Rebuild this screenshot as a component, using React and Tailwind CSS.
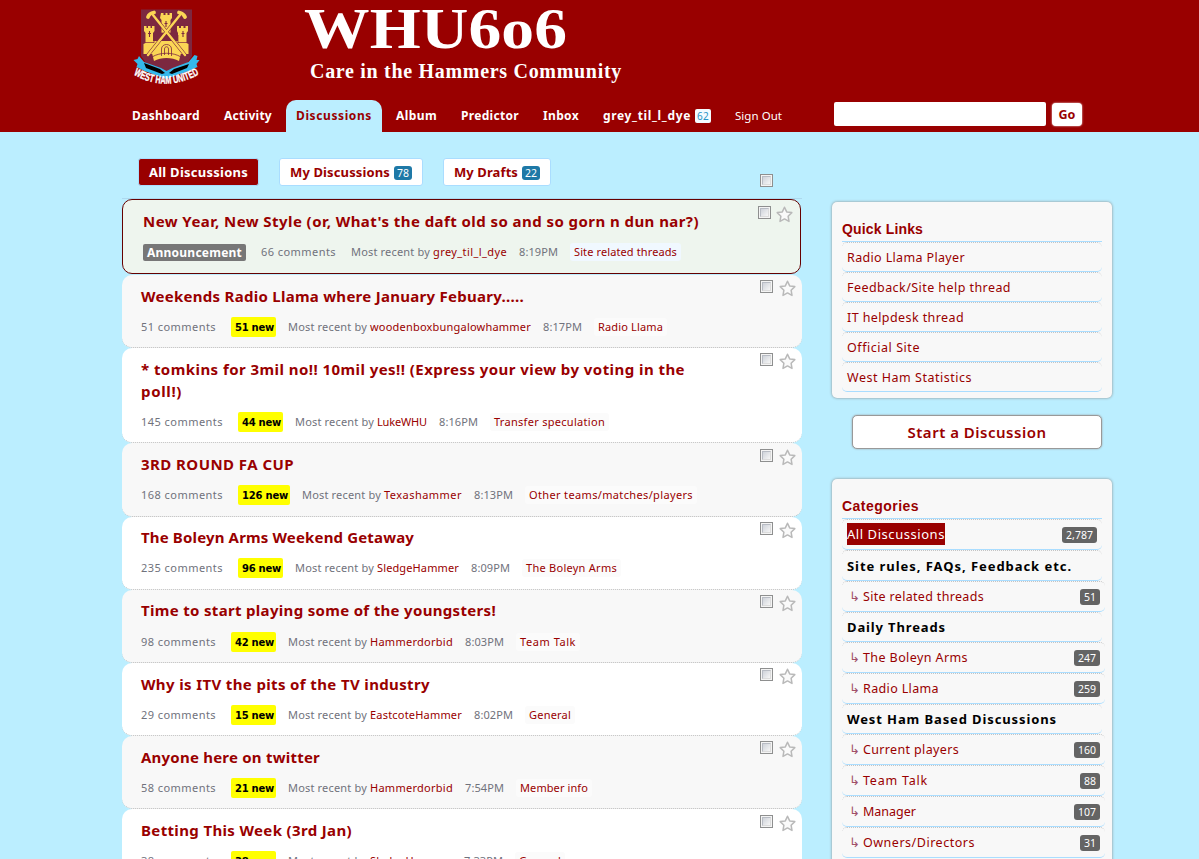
import { useLayoutEffect, useRef } from "react";

/* One line of text whose letter spacing is adjusted to fill a given width. */
function T({ w, className = "", children }) {
  const ref = useRef(null);
  useLayoutEffect(() => {
    const el = ref.current;
    el.style.letterSpacing = "0px";
    const natural = parseFloat(getComputedStyle(el).width);
    const count = el.textContent.length;
    el.style.letterSpacing = (w - natural) / count + "px";
  }, [w]);
  return (
    <span ref={ref} className={"inline-block shrink-0 whitespace-nowrap " + className}>
      {children}
    </span>
  );
}

function Crest() {
  return (
    <svg className="h-[84px] w-[74px]" viewBox="0 0 74 84">
      <path d="M10 3.500h51V50L54 60 35.500 72 17 60 10 50z" fill="#7c2840" />
      <g fill="#fbd655">
        <path d="M30 7h2.500v2h2V7h2v2h2V7H41v5l-1.500 2v13h-9V14L29 12z" />
        <path d="M13 20h2.500v2H17v-2h2.500v2H21v-2h2.500v5L22 27v8h25v-8l-1-2v-5h2v2h2v-2h2.500v2h2v-2H57v5l-1.500 2v10l2 1v10h-45V38l2-1V27L13 25z" />
        <path d="M21 47h29l-2 8c-7-4-18-4-25 0z" />
      </g>
      <g stroke="#7c2840" fill="none">
        <path d="M13 36.500h10M47 36.500h10M23 29v8M47 29v8M30 27h11" strokeWidth="0.700" />
        <path d="M35 15v6M33.500 17.500h3M18.500 25v6M17 27.500h3M52 25v6M50.500 27.500h3" strokeWidth="1.100" />
        <path d="M30.500 50V43c0-6 10-6 10 0v7M33.500 49v-6c0-3 4-3 4 0v6M21 51c8-5 21-5 29 0" strokeWidth="0.800" />
      </g>
      <g strokeLinecap="round" fill="none">
        <path d="M22 9l32 40M49 9L17 49" stroke="#7c2840" strokeWidth="3.600" />
        <path d="M22 9l32 40M49 9L17 49" stroke="#fbd655" strokeWidth="2.400" />
        <path d="M17 11c1-3 3-4 6-4.500M48 6.500c3 .5 5 2 6 4.500" stroke="#fbd655" strokeWidth="3.800" />
      </g>
      <g strokeLinejoin="round">
        <path
          d="M8 50l5 6 17 6 5.500 3 6-3 16-6 6-7 3 1-1 4h3l-3 4 1 3-9 4-17 6-5 2-6-2-16-6-8-4 1-3-4-4 4-1z"
          fill="#35b8ea"
        />
        <path d="M13 57l16 6 5 4-3 1-16-6z" fill="#000" />
        <path d="M58 58l-15 5-5 4 3 1 15-6z" fill="#000" />
      </g>
      <path id="motto" d="M2.500 68.500Q36 88 72 66" fill="none" />
      <text className="fill-white font-['Liberation_Sans'] text-[11px] font-bold" stroke="#ffffff" strokeWidth="0.350">
        <textPath href="#motto" textLength="69" lengthAdjust="spacingAndGlyphs">WEST HAM UNITED</textPath>
      </text>
    </svg>
  );
}

function Check() {
  return (
    <span className="block h-[13px] w-[13px] border border-[#8e8f8f] bg-[#f4f4f4] p-[1px]">
      <span className="block h-full w-full border border-[#b8bcc4] border-r-[#dcdcdc] border-b-[#dcdcdc] bg-linear-to-br from-[#cfd3da] to-[#f6f6f6]" />
    </span>
  );
}

function Star() {
  return (
    <svg className="h-[17px] w-[17px]" viewBox="0 0 17 17">
      <path
        d="M8.500 1.200l2.200 4.700 5.100.7-3.700 3.600.9 5.200-4.500-2.500L4 15.400l.9-5.200L1.200 6.600l5.100-.7z"
        fill="#fafafa"
        stroke="#b9b9b9"
        strokeWidth="1.500"
        strokeLinejoin="round"
      />
    </svg>
  );
}

const NAV = [
  ["Dashboard", 68],
  ["Activity", 48],
  ["Discussions", 76],
  ["Album", 41],
  ["Predictor", 58],
  ["Inbox", 36],
];

const ROWS = [
  { h: "h-[73px]", pad: "pt-[5px]", title: [["Weekends Radio Llama where January Febuary.....", 383]], c: ["51 comments", 75], n: ["51 new", 39], by: ["woodenboxbungalowhammer", 161], t: "8:17PM", cat: ["Radio Llama", 65] },
  { h: "h-[95px]", pad: "pt-[5px]", title: [["* tomkins for 3mil no!! 10mil yes!! (Express your view by voting in the", 544], ["poll!)", 41]], c: ["145 comments", 82], n: ["44 new", 39], by: ["LukeWHU", 50], t: "8:16PM", cat: ["Transfer speculation", 111] },
  { h: "h-[74px]", pad: "pt-[6px]", title: [["3RD ROUND FA CUP", 153]], c: ["168 comments", 82], n: ["126 new", 46], by: ["Texashammer", 78], t: "8:13PM", cat: ["Other teams/matches/players", 164] },
  { h: "h-[73px]", pad: "pt-[5px]", up: true, title: [["The Boleyn Arms Weekend Getaway", 273]], c: ["235 comments", 82], n: ["96 new", 39], by: ["SledgeHammer", 82], t: "8:09PM", cat: ["The Boleyn Arms", 91] },
  { h: "h-[73px]", pad: "pt-[5px]", up: true, low: true, title: [["Time to start playing some of the youngsters!", 355]], c: ["98 comments", 75], n: ["42 new", 39], by: ["Hammerdorbid", 83], t: "8:03PM", cat: ["Team Talk", 56] },
  { h: "h-[73px]", pad: "pt-[5px]", title: [["Why is ITV the pits of the TV industry", 289]], c: ["29 comments", 75], n: ["15 new", 39], by: ["EastcoteHammer", 92], t: "8:02PM", cat: ["General", 42] },
  { h: "h-[73px]", pad: "pt-[5px]", title: [["Anyone here on twitter", 179]], c: ["58 comments", 75], n: ["21 new", 39], by: ["Hammerdorbid", 83], t: "7:54PM", cat: ["Member info", 68] },
  { h: "h-[73px]", pad: "pt-[6px]", title: [["Betting This Week (3rd Jan)", 211]], c: ["38 comments", 75], n: ["38 new", 39], by: ["SledgeHammer", 82], t: "7:33PM", cat: ["General", 42] },
];

function Recent({ by, t, cat, tint }) {
  return (
    <>
      <T w={79}>Most recent by</T>
      <T w={by[1]} className="ml-[3px] text-[#900]">{by[0]}</T>
      <T w={39} className="ml-[12px]">{t}</T>
      <span className={"ml-[12px] rounded-[3px] px-[4px] leading-[18px] text-[#900] " + tint}>
        <T w={cat[1]}>{cat[0]}</T>
      </span>
    </>
  );
}

function Row({ row, i }) {
  return (
    <div className={"flex justify-between rounded-[10px] border-b border-dotted border-[#bbb] pr-[6px] pl-[19px] " + row.h + (i % 2 ? " bg-white" : " bg-[#f8f8f8]")}>
      <div className={row.up ? "pt-[9px]" : "pt-[10px]"}>
        <div className="text-[15px] leading-[22px] font-bold text-[#900]">
          {row.title.map(([s, w]) => (
            <div key={s} className="flex"><T w={w}>{s}</T></div>
          ))}
        </div>
        <div className={"flex h-[20px] items-center text-[11px] text-[#70727c] " + (row.low ? "mt-[11px]" : "mt-[10px]")}>
          <T w={row.c[1]}>{row.c[0]}</T>
          <span className="mr-[12px] ml-[15px] h-[20px] rounded-[2px] bg-[#ff0] pt-px pr-[2px] pl-[4px] font-['DejaVu_Sans',sans-serif] text-[10px] leading-[20px] font-bold text-black">
            <T w={row.n[1]}>{row.n[0]}</T>
          </span>
          <Recent by={row.by} t={row.t} cat={row.cat} tint="bg-[#fbfbfb]" />
        </div>
      </div>
      <div className={"flex gap-[6px] " + row.pad}>
        <Check />
        <Star />
      </div>
    </div>
  );
}

const LINKS = [
  ["Radio Llama Player", 118],
  ["Feedback/Site help thread", 164],
  ["IT helpdesk thread", 117],
  ["Official Site", 73],
  ["West Ham Statistics", 125],
];

const CATS = [
  ["h", "Site rules, FAQs, Feedback etc.", 225],
  ["c", "Site related threads", 121, "51", 12],
  ["h", "Daily Threads", 99, "short"],
  ["c", "The Boleyn Arms", 105, "247", 18],
  ["c", "Radio Llama", 76, "259", 18],
  ["h", "West Ham Based Discussions", 210, "short"],
  ["c", "Current players", 96, "160", 18],
  ["c", "Team Talk", 65, "88", 12],
  ["c", "Manager", 53, "107", 18],
  ["c", "Owners/Directors", 112, "31", 12],
];

const LINE = "flex items-center rounded-[5px] border-t border-b border-t-[#c4c4c4] border-b-[#aaddff] [border-top-style:dotted] pl-[5px] ";
const PANEL = "rounded-[5px] bg-[#f8f8f8] pr-[7px] pl-[10px] shadow-[0_0_3px_#888]";

function Count({ w, children }) {
  return (
    <span className="ml-auto rounded-[3px] bg-[#646464] px-[4px] text-[10.500px] leading-[16px] text-white">
      <T w={w}>{children}</T>
    </span>
  );
}

export default function App() {
  return (
    <div className="h-[859px] w-[1199px] overflow-hidden bg-[#bbeeff] font-['Noto_Sans','Open_Sans',sans-serif]">
      <header className="h-[132px] bg-[#900] pl-[122px] text-white">
        <div className="flex h-[100px]">
          <div className="w-[182px] pt-[6px] pl-[9px]"><Crest /></div>
          <div className="font-['Liberation_Serif',serif] font-bold">
            <h1 className="w-[233px] origin-left scale-x-[1.130] text-[58px] leading-[58px] whitespace-nowrap">
              <T w={233}>WHU6o6</T>
            </h1>
            <p className="ml-[6px] text-[20px] leading-[26px]">
              <T w={312}>Care in the Hammers Community</T>
            </p>
          </div>
        </div>
        <div className="flex h-[32px]">
          <nav className="flex gap-[4px] text-[12px] leading-[32px] font-bold">
            {NAV.map(([s, w]) => (
              <a key={s} className={"px-[10px] " + (s === "Discussions" ? "rounded-t-[10px] bg-[#bbeeff] text-[#900]" : "")}>
                <T w={w}>{s}</T>
              </a>
            ))}
            <a className="flex items-center gap-[4px] px-[10px]">
              <T w={88}>grey_til_l_dye</T>
              <span className="rounded-[2px] bg-[#f4fbff] px-[2px] text-[10px] leading-[14px] font-normal text-[#2a94c6]"><T w={12}>62</T></span>
            </a>
            <a className="px-[10px] text-[11.500px] font-normal"><T w={47}>Sign Out</T></a>
          </nav>
          <div className="ml-[42px] flex gap-[6px] pt-[2px]">
            <div className="h-[24px] w-[212px] rounded-[2px] bg-white" />
            <button className="mt-[1px] h-[23px] w-[30px] rounded-[4px] bg-white text-[12.500px] leading-[23px] font-bold text-[#900] shadow-[0_0_2px_#fff]">
              <T w={17}>Go</T>
            </button>
          </div>
        </div>
      </header>

      <div className="flex gap-[29px] pl-[122px]">
        <main className="w-[680px]">
          <div className="flex h-[67px] border-b border-[#add8ee] pt-[26px] pl-[16px] text-[13px] leading-[26px] font-bold text-[#900]">
            <a className="h-[28px] rounded-[3px] border border-[#aaddff] bg-[#900] px-[10px] text-white"><T w={99}>All Discussions</T></a>
            <a className="ml-[20px] flex h-[28px] items-center gap-[4px] rounded-[3px] border border-[#aaddff] bg-white px-[10px]">
              <T w={100}>My Discussions</T>
              <span className="mt-px rounded-[3px] bg-[#1e79a7] px-[3px] text-[10.500px] leading-[14px] font-normal text-white"><T w={12}>78</T></span>
            </a>
            <a className="ml-[20px] flex h-[28px] items-center gap-[4px] rounded-[3px] border border-[#aaddff] bg-white px-[10px]">
              <T w={64}>My Drafts</T>
              <span className="mt-px rounded-[3px] bg-[#1e79a7] px-[3px] text-[10.500px] leading-[14px] font-normal text-white"><T w={12}>22</T></span>
            </a>
            <span className="mt-[16px] mr-[29px] ml-auto"><Check /></span>
          </div>
          <div className="mb-px flex h-[75px] w-[679px] justify-between rounded-[10px] border border-[#600] bg-[#eef5ee] pr-[7px] pl-[20px]">
            <div className="pt-[10px]">
              <div className="text-[15px] leading-[22px] font-bold text-[#900]">
                <T w={556}>New Year, New Style (or, What's the daft old so and so gorn n dun nar?)</T>
              </div>
              <div className="mt-[10px] flex h-[20px] items-center text-[11px] text-[#70727c]">
                <span className="mr-[15px] rounded-[2px] bg-[#777] px-[4px] text-[12px] leading-[17px] font-bold text-white">
                  <T w={95}>Announcement</T>
                </span>
                <T w={75} className="mr-[15px]">66 comments</T>
                <Recent by={["grey_til_l_dye", 74]} t="8:19PM" cat={["Site related threads", 103]} tint="bg-[#f0f8ff]" />
              </div>
            </div>
            <div className="flex gap-[5px] pt-[6px]">
              <Check />
              <Star />
            </div>
          </div>
          {ROWS.map((row, i) => (
            <Row key={i} row={row} i={i} />
          ))}
        </main>

        <aside className="w-[282px] px-px pt-[70px]">
          <section className={PANEL + " h-[196px]"}>
            <h4 className="h-[40px] w-[260px] border-b border-[#aaddff] pt-[19px] font-['Liberation_Sans',sans-serif] text-[14px] leading-[16px] font-bold text-[#900]">
              <T w={81}>Quick Links</T>
            </h4>
            {LINKS.map(([s, w]) => (
              <div key={s} className={LINE + "h-[30px] w-[260px] pt-[2px] text-[12.500px] text-[#900]"}>
                <T w={w}>{s}</T>
              </div>
            ))}
          </section>
          <button className="mt-[17px] ml-[20px] block h-[34px] w-[250px] rounded-[5px] border border-[#999] bg-white text-[15px] font-semibold text-[#900] shadow-[0_0_2px_#999]">
            <T w={139}>Start a Discussion</T>
          </button>
          <section className={PANEL + " mt-[30px] h-[420px]"}>
            <h4 className="h-[40px] w-[260px] border-b border-[#aaddff] pt-[19px] font-['Liberation_Sans',sans-serif] text-[14px] leading-[16px] font-bold text-[#900]">
              <T w={77}>Categories</T>
            </h4>
            <div className={LINE + "h-[31px] w-[260px] pr-[5px] text-[13px] text-white"}>
              <span className="mb-[2px] bg-[#900] leading-[22px]"><T w={98}>All Discussions</T></span>
              <Count w={27}>2,787</Count>
            </div>
            {CATS.map(([kind, s, w, n, nw]) =>
              kind === "h" ? (
                <div key={s} className={LINE + "w-[260px] pt-[2px] text-[13px] font-bold text-black " + (n === "short" ? "h-[30px]" : "h-[31px]")}>
                  <T w={w}>{s}</T>
                </div>
              ) : (
                <div key={s} className={LINE + "h-[31px] w-[263px] pr-[5px] text-[12.500px] text-[#900]"}>
                  <span className="w-[16px] pl-[2px] font-['DejaVu_Sans',sans-serif] text-[13px] leading-[20px] text-[#a0506a]">↳</span>
                  <span className="pt-[2px]"><T w={w}>{s}</T></span>
                  <Count w={nw}>{n}</Count>
                </div>
              )
            )}
          </section>
        </aside>
      </div>
    </div>
  );
}
